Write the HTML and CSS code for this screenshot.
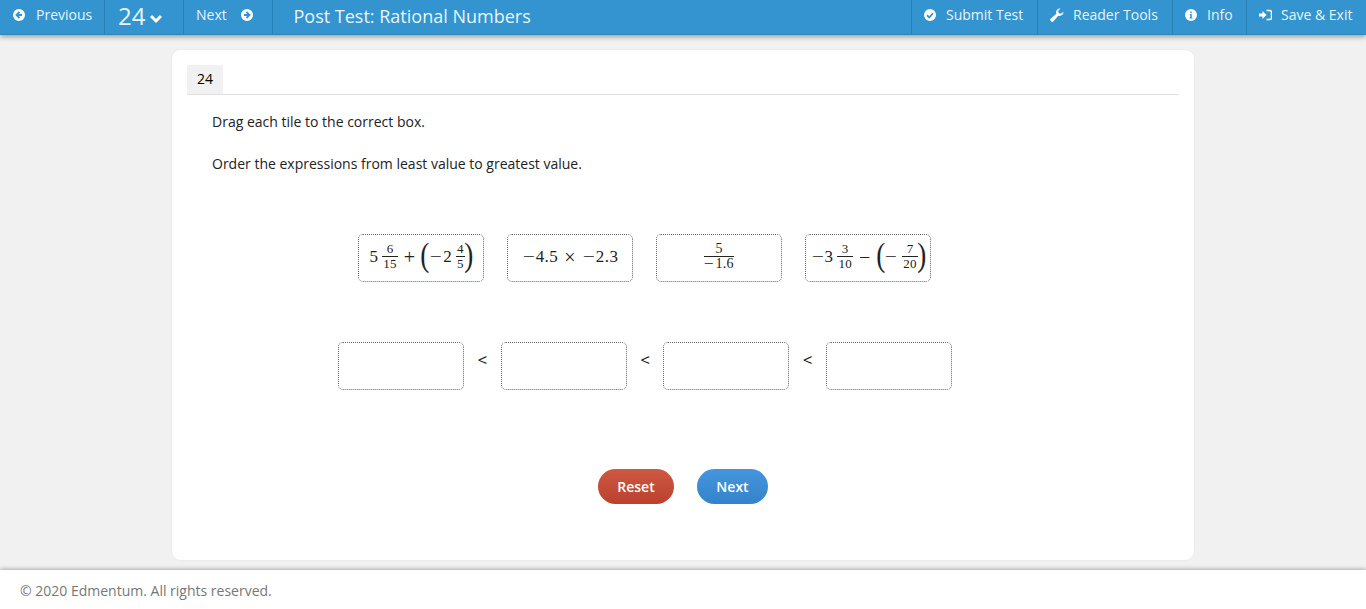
FILE: index.html
```html
<!DOCTYPE html>
<html lang="en">
<head>
<meta charset="utf-8">
<title>Post Test: Rational Numbers</title>
<link rel="stylesheet" href="styles.css">
</head>
<body>
<header class="topbar">
  <div class="seg seg-prev">
    <svg class="ico" viewBox="0 0 24 24"><circle cx="12" cy="12" r="12" fill="#fff"/><path d="M13 6l-6 6 6 6M7.500 12H18" fill="none" stroke="#3394cf" stroke-width="3.600"/></svg>
    <span>Previous</span>
  </div>
  <div class="seg seg-num">
    <span class="num">24</span>
    <svg class="chev" viewBox="0 0 14 10"><path d="M2 2l5 5 5-5" fill="none" stroke="#fff" stroke-width="3"/></svg>
  </div>
  <div class="seg seg-next">
    <span>Next</span>
    <svg class="ico" viewBox="0 0 24 24"><circle cx="12" cy="12" r="12" fill="#fff"/><path d="M11 6l6 6-6 6M16.500 12H6" fill="none" stroke="#3394cf" stroke-width="3.600"/></svg>
  </div>
  <div class="title">Post Test: Rational Numbers</div>
  <div class="seg seg-submit">
    <svg class="ico" viewBox="0 0 24 24"><circle cx="12" cy="12" r="12" fill="#fff"/><path d="M6 12.500l4.500 4.500L18 8.500" fill="none" stroke="#3394cf" stroke-width="3.600"/></svg>
    <span>Submit Test</span>
  </div>
  <div class="seg seg-tools">
    <svg class="ico ico-tool" viewBox="0 0 24 24"><path d="M23 6.500a6.500 6.500 0 0 1-8.700 6.600L6 22.500a2.700 2.700 0 0 1-4.300-.2 2.700 2.700 0 0 1-.2-4.300l9.400-8.300A6.500 6.500 0 0 1 18 1l-4 4 1 4 4 1z" fill="#fff"/></svg>
    <span>Reader Tools</span>
  </div>
  <div class="seg seg-info">
    <svg class="ico" viewBox="0 0 24 24"><circle cx="12" cy="12" r="12" fill="#fff"/><path d="M9.500 10h4v7h1.500v2H9v-2h1.500v-5h-1zM10.500 5h3v3h-3z" fill="#3394cf"/></svg>
    <span>Info</span>
  </div>
  <div class="seg seg-save">
    <svg class="ico ico-save" viewBox="0 0 26 24"><path d="M0 9h7V4l8 8-8 8v-5H0z" fill="#fff"/><path d="M15 3h6a4 4 0 0 1 4 4v10a4 4 0 0 1-4 4h-6" fill="none" stroke="#fff" stroke-width="3"/></svg>
    <span>Save &amp; Exit</span>
  </div>
</header>

<main class="page">
  <section class="card">
    <div class="tabrow"><div class="tab">24</div></div>
    <div class="question">
      <p class="text">Drag each tile to the correct box.</p>
      <p class="text">Order the expressions from least value to greatest value.</p>

      <div class="tiles">
        <div class="box tile">
          <span class="math">5<span class="frac"><span class="n">6</span><span class="d">15</span></span><span class="op">+</span><span class="paren">(</span><span class="minus">−</span>2<span class="frac"><span class="n">4</span><span class="d">5</span></span><span class="paren">)</span></span>
        </div>
        <div class="box tile">
          <span class="math"><span class="minus">−</span>4.5<span class="op op-wide">×</span><span class="minus">−</span>2.3</span>
        </div>
        <div class="box tile">
          <span class="math"><span class="frac frac-wide"><span class="n">5</span><span class="d"><span class="minus">−</span>1.6</span></span></span>
        </div>
        <div class="box tile">
          <span class="math"><span class="minus">−</span>3<span class="frac"><span class="n">3</span><span class="d">10</span></span><span class="op">−</span><span class="paren">(</span><span class="minus">−</span><span class="frac"><span class="n">7</span><span class="d">20</span></span><span class="paren">)</span></span>
        </div>
      </div>

      <div class="drops">
        <div class="box"></div><span class="lt">&lt;</span>
        <div class="box"></div><span class="lt">&lt;</span>
        <div class="box"></div><span class="lt">&lt;</span>
        <div class="box"></div>
      </div>

      <div class="actions">
        <button class="btn btn-reset" type="button">Reset</button>
        <button class="btn btn-next" type="button">Next</button>
      </div>
    </div>
  </section>
</main>

<footer class="footer">© 2020 Edmentum. All rights reserved.</footer>
</body>
</html>
```
FILE: styles.css
```css
* { box-sizing: border-box; }
html, body { margin: 0; height: 609px; overflow: hidden; }
body {
  font-family: "Open Sans", sans-serif;
  background: #fff;
  color: #222;
  display: flex;
  flex-direction: column;
}
.topbar {
  height: 35px;
  flex: none;
  display: flex;
  align-items: stretch;
  background: #3394cf;
  color: #e8f4fb;
  font-size: 14px;
  box-shadow: 0 2px 5px rgba(0, 0, 0, .35);
  border-bottom: 1px solid #2f86bb;
  position: relative;
  z-index: 2;
}
.seg {
  display: flex;
  align-items: center;
  padding-bottom: 5px;
  border-right: 1px solid #2a7fb4;
  white-space: nowrap;
}
.ico { width: 12px; height: 12px; flex: none; }
.ico-save { width: 13px; }
.ico-tool { width: 14px; height: 14px; }
.seg-prev { width: 105px; padding-left: 13px; gap: 11px; }
.seg-num { width: 79px; padding-left: 13px; }
.num { font-size: 24px; line-height: 30px; padding-top: 3px; }
.chev { width: 14px; height: 10px; margin-left: 4px; margin-top: 8px; }
.seg-next { width: 89px; padding-left: 12px; gap: 14px; }
.title {
  flex: 1;
  padding-left: 20.500px;
  font-size: 18px;
  line-height: 33px;
  color: #e8f4fb;
}
.seg-submit { width: 127px; padding-left: 12px; gap: 10px; border-left: 1px solid #2a7fb4; }
.seg-tools { width: 135px; padding-left: 12px; gap: 9px; }
.seg-info { width: 74px; padding-left: 12px; gap: 10px; }
.seg-save { width: 119px; padding-left: 12px; gap: 9px; border-right: 0; }

.page {
  height: 535px;
  flex: none;
  background: #f1f1f1;
  padding: 14px 171px 0;
}
.card {
  width: 1024px;
  height: 512px;
  background: #fff;
  border: 1px solid #ececec;
  border-radius: 10px;
  padding: 15px 15px 0;
}
.tabrow { border-bottom: 1px solid #e2e2e2; height: 30px; }
.tab {
  width: 36px;
  height: 29px;
  background: #f1f1f1;
  color: #000;
  font-size: 14px;
  font-weight: 400;
  line-height: 28px;
  text-align: center;
}
.question { width: 891px; padding-left: 25px; }
.text {
  margin: 0;
  font-size: 14px;
  line-height: 19px;
  color: #222;
}
.text:first-child { margin-top: 17px; margin-bottom: 23px; }
.tiles {
  display: flex;
  justify-content: center;
  gap: 23px;
  margin-top: 61px;
  padding-right: 1px;
}
.box {
  width: 126px;
  height: 48px;
  flex: none;
  border: 1px dotted #666;
  border-radius: 5px;
  background: #fff;
}
.tile { display: flex; align-items: center; justify-content: center; }
.math {
  display: inline-flex;
  align-items: center;
  padding-bottom: 2px;
  font-family: "Liberation Serif", serif;
  font-size: 17px;
  letter-spacing: .4px;
  color: #222;
  white-space: nowrap;
}
.minus { display: inline-block; transform: scaleX(1.25); margin: 0 2px; }
.frac {
  display: inline-flex;
  flex-direction: column;
  align-items: center;
  font-size: 13px;
  line-height: 12px;
  margin-left: 4px;
  margin-bottom: 2px;
  letter-spacing: .2px;
}
.frac .n { border-bottom: 1px solid #222; align-self: stretch; text-align: center; padding: 0 1px 1px; }
.frac .d { padding: 1px 1px 0; }
.frac-wide { margin: 0 0 2px; width: 30px; font-size: 14px; }
.frac-wide .minus { margin: 0 2px 0 1px; }
.op { margin: 0 6px; font-size: 20px; line-height: 16px; }
.op-wide { margin: 0 6px; }
.paren { font-size: 34px; line-height: 32px; font-weight: 400; transform: scaleX(.8) translateY(-2px); margin: 0 -2px; }
.drops {
  display: flex;
  justify-content: center;
  margin-top: 60px;
}
.lt {
  width: 36.670px;
  text-align: center;
  font-size: 17px;
  line-height: 36px;
  color: #111;
}
.actions {
  display: flex;
  justify-content: center;
  gap: 23px;
  margin-top: 79px;
  padding-left: 76px;
}
.btn {
  height: 35px;
  border: 0;
  border-radius: 18px;
  color: #fff;
  font-family: "Open Sans", sans-serif;
  font-size: 14px;
  font-weight: 600;
  padding: 0;
}
.btn-reset { width: 76px; background: linear-gradient(#cf5843, #b9412e); }
.btn-next { width: 71px; background: linear-gradient(#4596dc, #3283cb); }
.footer {
  flex: 1;
  padding: 11px 20px 0;
  font-size: 14px;
  line-height: 19px;
  color: #777;
  background: #fff;
  box-shadow: 0 -1px 4px rgba(0, 0, 0, .3);
  position: relative;
  z-index: 1;
}
```
